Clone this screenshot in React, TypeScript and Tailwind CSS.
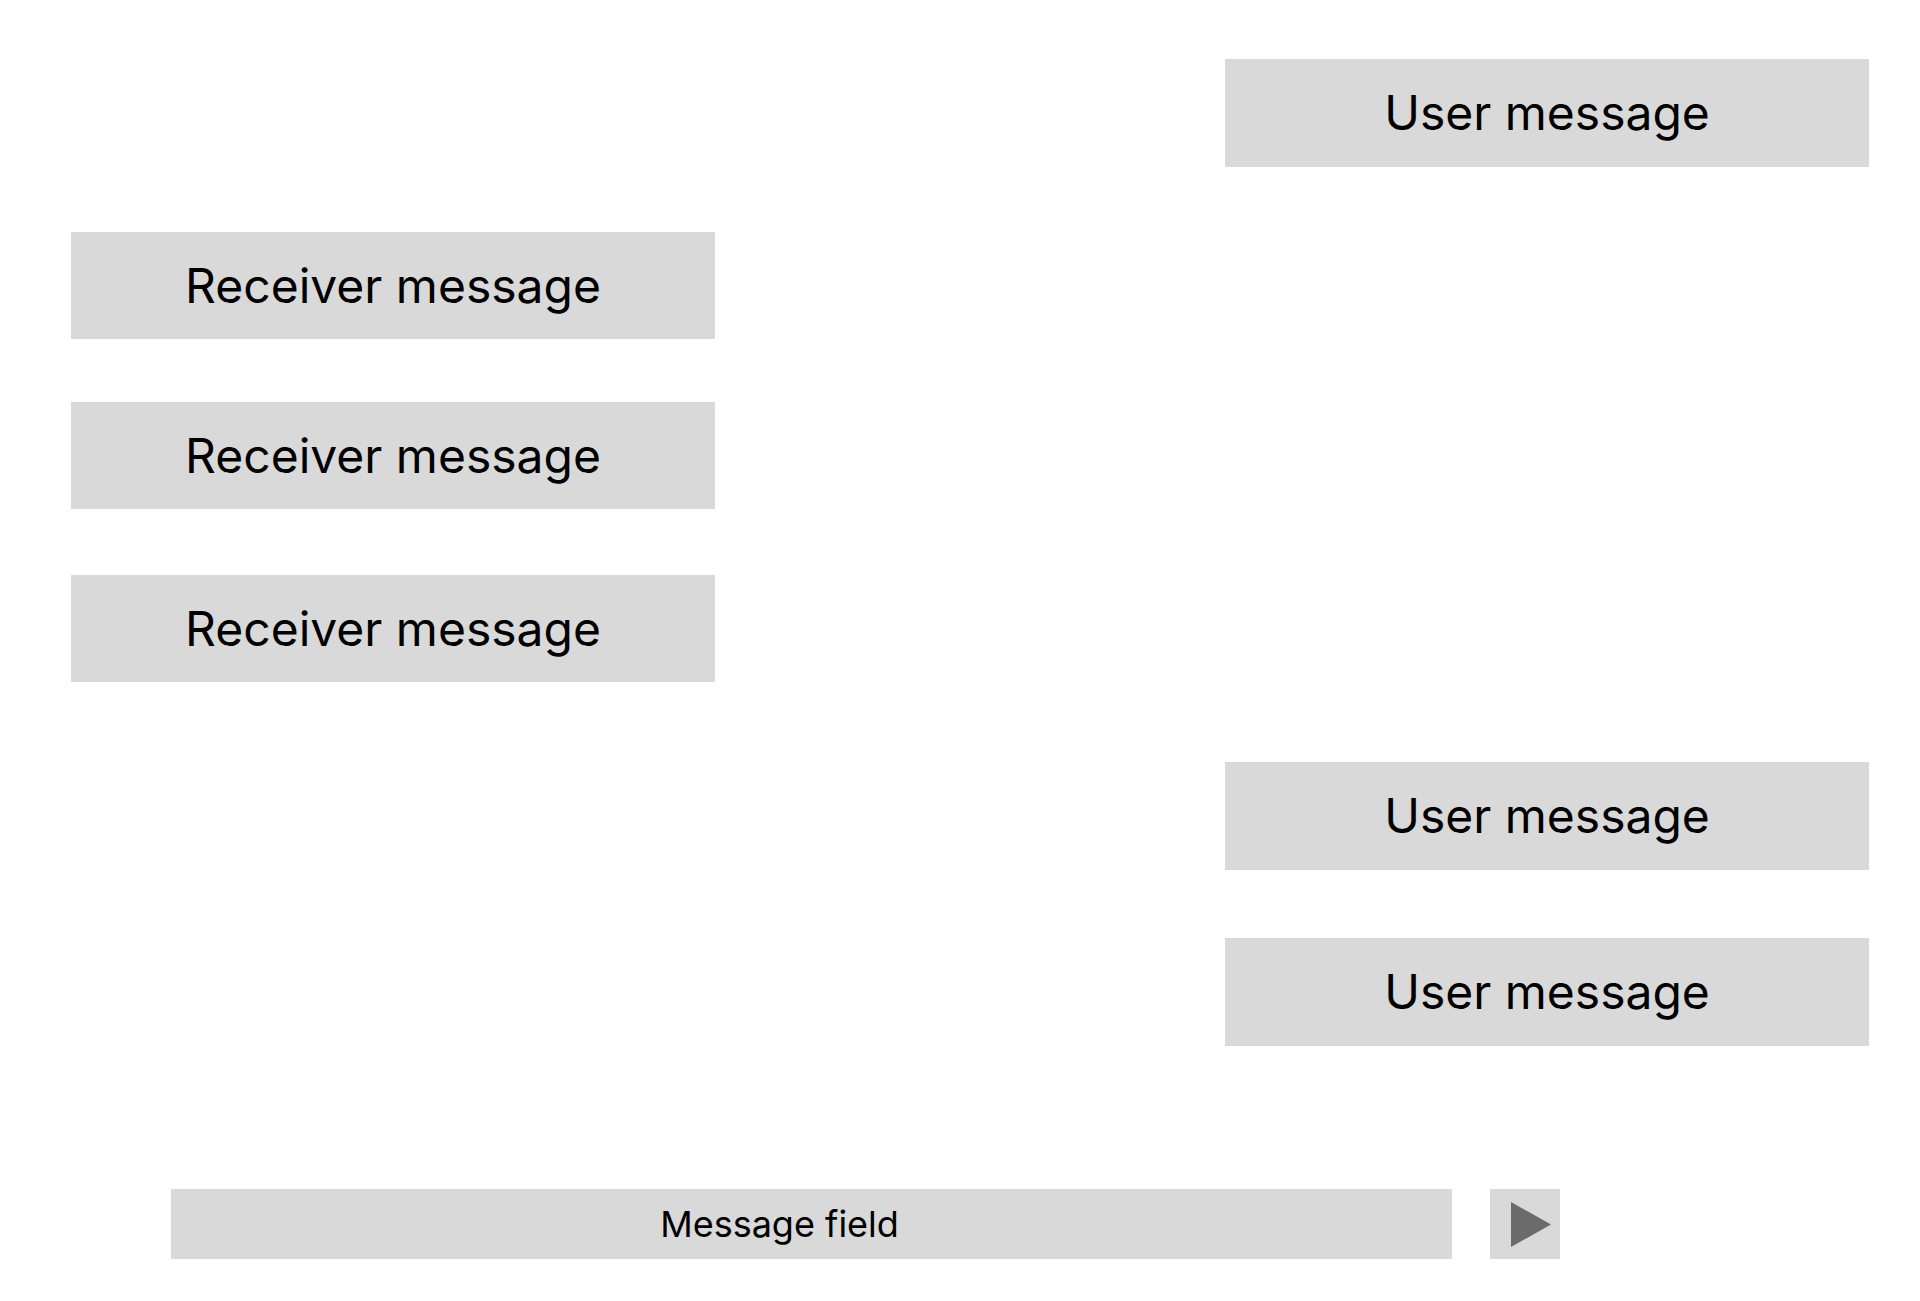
import React from "react";

type Msg = { from: "user" | "receiver"; text: string; box: string };

const messages: Msg[] = [
  { from: "user", text: "User message", box: "mt-[59px] h-[108px]" },
  { from: "receiver", text: "Receiver message", box: "mt-[65px] h-[107px]" },
  { from: "receiver", text: "Receiver message", box: "mt-[63px] h-[107px]" },
  { from: "receiver", text: "Receiver message", box: "mt-[66px] h-[107px]" },
  { from: "user", text: "User message", box: "mt-[80px] h-[108px]" },
  { from: "user", text: "User message", box: "mt-[68px] h-[108px]" },
];

function Bubble({ msg }: { msg: Msg }) {
  const side = msg.from === "user" ? "self-end mr-[51px]" : "self-start ml-[71px]";
  return (
    <div
      className={`${side} ${msg.box} flex w-[644px] items-center justify-center bg-[#d9d9d9] text-[48px] text-black`}
    >
      {msg.text}
    </div>
  );
}

export default function App() {
  return (
    <div
      className="flex h-[1301px] w-full flex-col bg-white"
      style={{ fontFamily: "Inter, 'Noto Sans', sans-serif" }}
    >
      {messages.map((m, i) => (
        <Bubble key={i} msg={m} />
      ))}

      <div className="ml-[171px] mt-[143px] flex items-center gap-[38px]">
        <div className="flex h-[70px] w-[1281px] items-center justify-center bg-[#d9d9d9] pr-[64px] text-[36px] text-black">
          Message field
        </div>
        <button className="flex h-[70px] w-[70px] items-center bg-[#d9d9d9] pl-[21px]" aria-label="Send">
          <svg width="40" height="45" viewBox="0 0 40 45">
            <polygon points="0,0 40,22.5 0,45" fill="#6b6b6b" />
          </svg>
        </button>
      </div>
    </div>
  );
}
